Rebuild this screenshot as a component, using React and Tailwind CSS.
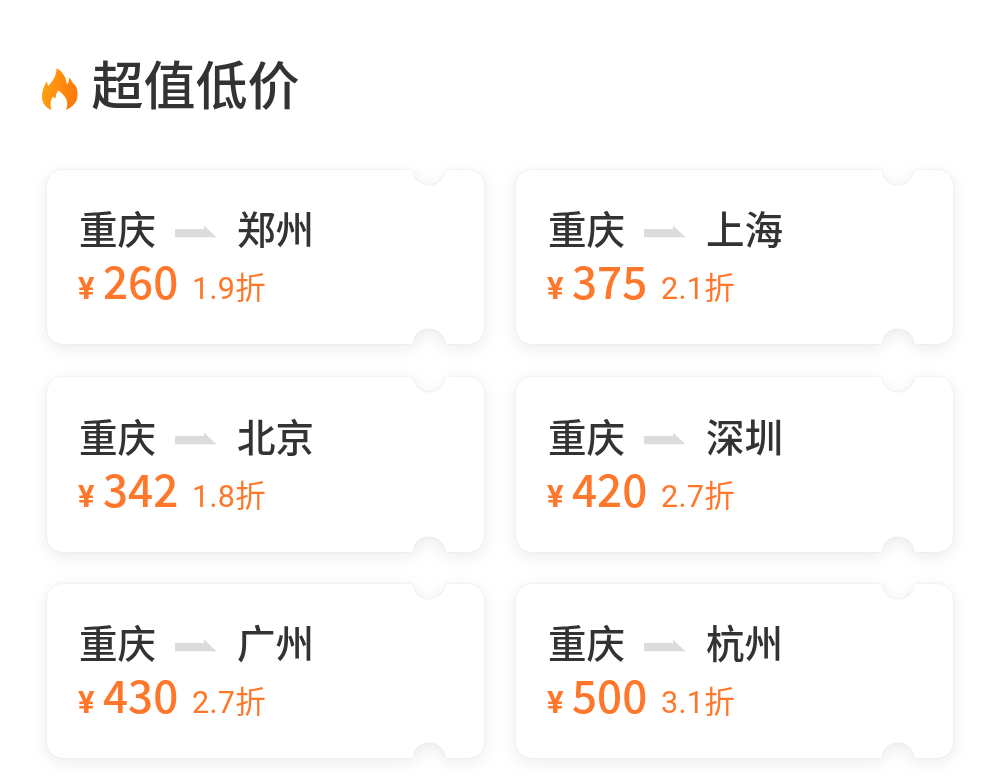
import React from 'react';

const FLIGHTS = [
  { from: '重庆', to: '郑州', price: 260, discount: '1.9' },
  { from: '重庆', to: '上海', price: 375, discount: '2.1' },
  { from: '重庆', to: '北京', price: 342, discount: '1.8' },
  { from: '重庆', to: '深圳', price: 420, discount: '2.7' },
  { from: '重庆', to: '广州', price: 430, discount: '2.7' },
  { from: '重庆', to: '杭州', price: 500, discount: '3.1' },
];

const FlameIcon = () => (
  <svg viewBox="0 0 38 44" className="w-[38px] h-[44px] shrink-0">
    <defs>
      <linearGradient id="flame" x1="0" y1="0" x2="1" y2="0.25">
        <stop offset="0" stopColor="#ffa514" />
        <stop offset="1" stopColor="#ff7a08" />
      </linearGradient>
    </defs>
    <path
      fill="url(#flame)"
      d="M15.6 1.2C21 4 25 9.5 26 17.5C27.6 15.8 28.2 13.2 28.1 10.2C30.5 12.8 31 15.2 32.8 17C34.5 18.5 35.3 19.3 35.6 21C37.8 29 36.8 38 25 43C26.6 39 26.8 35.5 25 31.5C23.2 28 20.8 26 17.2 23.4C15.6 25.5 15 27.5 14.4 31.4C13.2 31 12.5 30.4 12.1 29.2C9.4 33 8.8 37.5 10.4 43C4.5 40.5 0.8 35.5 0.9 29.5C1 23.5 3 19.8 5.6 14.6C6.4 16.4 6.8 17.3 7 19.2C11.5 14.8 15.6 8.5 15.6 1.2Z"
    />
  </svg>
);

const RouteArrow = () => (
  <svg viewBox="0 0 42 13" className="w-[42px] h-[13px] shrink-0">
    <path fill="#dcdcde" d="M0 4H29V0.5L41.5 12.3H0Z" />
  </svg>
);

const TicketCard = ({ flight }) => (
  <div className="[filter:drop-shadow(0_0_0.8px_#dde3f0)_drop-shadow(0_4px_8px_rgba(0,0,0,0.075))]">
    {/* Half-round notches on the top and bottom edges */}
    <div className="flex h-full flex-col justify-end rounded-[15px] bg-white pb-[35px] pl-8 [mask-image:radial-gradient(circle_at_382px_-1px,transparent_16px,black_17px),radial-gradient(circle_at_382px_calc(100%_+_1px),transparent_16px,black_17px)] [mask-composite:intersect]">
      <div className="flex h-[44px] items-center text-[38.5px] font-medium leading-[44px] text-[#333333]">
        <span className="w-[78px]">{flight.from}</span>
        <span className="ml-[18px] mt-[8px] flex">
          <RouteArrow />
        </span>
        <span className="ml-5">{flight.to}</span>
      </div>
      <div className="-ml-px mb-[35px] flex h-[25px] items-baseline leading-[62px] text-[#ff772a]">
        <span className="w-[25px] font-[Roboto,sans-serif] text-[31px] font-bold">¥</span>
        <span className="w-[89px] text-[44px] font-medium">{flight.price}</span>
        <span className="font-[Roboto,'Noto_Sans_CJK_SC',sans-serif] text-[30.5px] tracking-[0.3px]">
          {flight.discount}折
        </span>
      </div>
    </div>
  </div>
);

const App = () => {
  return (
    <div className="h-[779px] w-[1000px] overflow-hidden bg-white font-['Noto_Sans_CJK_SC',sans-serif]">
      <div className="flex h-[170px] pl-[40.5px] pt-[48px]">
        <div className="flex h-[70px] items-center gap-[13px]">
          <span className="mt-[12px] flex">
            <FlameIcon />
          </span>
          <h1 className="text-[52px] font-medium leading-[70px] text-[#333333]">超值低价</h1>
        </div>
      </div>

      <div className="ml-[47px] grid w-[906px] grid-cols-2 grid-rows-[174px_175px_174px] gap-x-8 gap-y-[32.5px]">
        {FLIGHTS.map((flight) => (
          <TicketCard key={flight.to} flight={flight} />
        ))}
      </div>
    </div>
  );
};

export default App;
